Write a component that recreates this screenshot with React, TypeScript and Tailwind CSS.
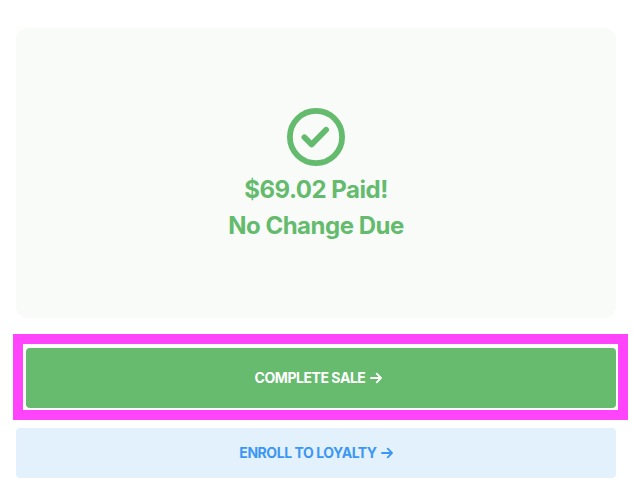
const messages = ['$69.02 Paid!', 'No Change Due']

function CheckCircle() {
  return (
    <svg
      width="58"
      height="58"
      viewBox="0 0 58 58"
      fill="none"
      stroke="currentColor"
      strokeWidth="5.8"
      strokeLinecap="round"
      strokeLinejoin="round"
    >
      <circle cx="29" cy="29" r="26.1" />
      <path d="M17.4 29.3l7.2 7.2 14.5-14.7" />
    </svg>
  )
}

function ArrowRight() {
  return (
    <svg
      width="12"
      height="12"
      viewBox="0 0 12 12"
      fill="none"
      stroke="currentColor"
      strokeWidth="1.8"
      strokeLinecap="round"
      strokeLinejoin="round"
    >
      <path d="M1 6h10M6.7 1.7L11 6l-4.3 4.3" />
    </svg>
  )
}

export default function App() {
  return (
    <main className="flex h-[499px] w-[634px] flex-col bg-white pt-7 font-['Inter',sans-serif]">
      {/* Payment result */}
      <section className="ml-4 flex h-[290px] w-[600px] flex-col items-center rounded-xl bg-[#f8fbf8] pt-20 text-[#64bb6e]">
        <CheckCircle />
        <div className="mt-1.5 text-center text-2xl font-[650] leading-9 tracking-[-0.48px]">
          {messages.map((message) => (
            <p key={message}>{message}</p>
          ))}
        </div>
      </section>

      {/* Highlighted action */}
      <div className="ml-[13px] mt-4 h-[86px] w-[615px] border-10 border-[#ff44fb] pl-[3px] pt-1">
        <button className="flex h-[60px] w-[590px] items-center justify-center gap-[5px] rounded bg-[#66bb6f] pr-[5px] text-sm font-[650] tracking-[-0.45px] text-white">
          <span>COMPLETE SALE</span>
          <ArrowRight />
        </button>
      </div>

      <button className="ml-4 mt-2 flex h-[50px] w-[600px] items-center justify-center gap-1 rounded bg-[#e3f1fd] text-sm font-[650] tracking-[-0.45px] text-[#3b97f3]">
        <span>ENROLL TO LOYALTY</span>
        <ArrowRight />
      </button>
    </main>
  )
}
